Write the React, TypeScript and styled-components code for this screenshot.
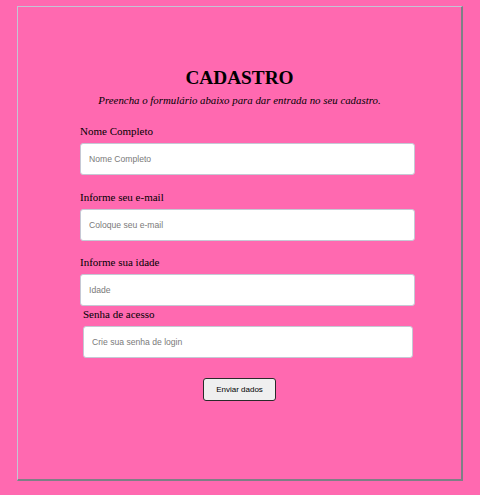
import React from "react";
import styled, { createGlobalStyle } from "styled-components";

const Global = createGlobalStyle`
  html, body { margin: 0; padding: 0; background: #ff69b0; }
  body { font-family: "Liberation Serif", "Times New Roman", serif; }
`;

const Page = styled.div`
  width: 480px;
  height: 495px;
  padding-top: 6px;
  box-sizing: border-box;
  background: #ff69b0;
`;

const Frame = styled.div`
  box-sizing: border-box;
  margin-left: 17px;
  width: 446px;
  height: 475px;
  border-style: solid;
  border-width: 1px 2px 2px 1px;
  border-color: #c4c4d4 #7f7f86 #7f7f86 #c4c4d4;
  padding-top: 60px;
`;

const Title = styled.h1`
  margin: 0;
  text-align: center;
  font-size: 19.3px;
  font-weight: bold;
  line-height: 22px;
  color: #000;
`;

const Subtitle = styled.p`
  margin: 5px 0 0;
  text-align: center;
  font-size: 10.85px;
  font-style: italic;
  line-height: 13px;
  color: #000;
`;

const Form = styled.form`
  display: flex;
  flex-direction: column;
  padding-left: 62px;
  margin-top: 18px;
`;

const Field = styled.div<{ $shift?: number; $top: number }>`
  display: flex;
  flex-direction: column;
  margin-top: ${(p) => p.$top}px;
  padding-left: ${(p) => p.$shift ?? 0}px;
`;

const Label = styled.label`
  font-size: 11px;
  line-height: 13px;
  color: #000;
  margin-bottom: 5px;
`;

const Input = styled.input<{ $w: number }>`
  box-sizing: border-box;
  width: ${(p) => p.$w}px;
  height: 32px;
  border: 1px solid #c5c8d4;
  border-radius: 3px;
  background: #fff;
  padding: 0 8px;
  font-family: "Liberation Sans", Arial, sans-serif;
  font-size: 8.6px;
  outline: none;
  &::placeholder { color: #7a7a7a; }
`;

const Actions = styled.div`
  display: flex;
  justify-content: center;
  margin-top: 20px;
  padding-right: 62px;
`;

const Button = styled.button`
  box-sizing: border-box;
  width: 73px;
  height: 23px;
  border: 1px solid #2a2a2a;
  border-radius: 3px;
  background: #efefef;
  font-family: "Liberation Sans", Arial, sans-serif;
  font-size: 8px;
  color: #000;
  padding: 0;
`;

export default function App() {
  return (
    <Page>
      <Global />
      <Frame>
        <Title>CADASTRO</Title>
        <Subtitle>Preencha o formulário abaixo para dar entrada no seu cadastro.</Subtitle>
        <Form onSubmit={(e) => e.preventDefault()}>
          <Field $top={0}>
            <Label>Nome Completo</Label>
            <Input $w={335} placeholder="Nome Completo" />
          </Field>
          <Field $top={15.5}>
            <Label>Informe seu e-mail</Label>
            <Input $w={335} placeholder="Coloque seu e-mail" />
          </Field>
          <Field $top={15.5}>
            <Label>Informe sua idade</Label>
            <Input $w={335} placeholder="Idade" />
          </Field>
          <Field $top={2} $shift={3}>
            <Label>Senha de acesso</Label>
            <Input $w={330} type="password" placeholder="Crie sua senha de login" />
          </Field>
          <Actions>
            <Button type="submit">Enviar dados</Button>
          </Actions>
        </Form>
      </Frame>
    </Page>
  );
}
